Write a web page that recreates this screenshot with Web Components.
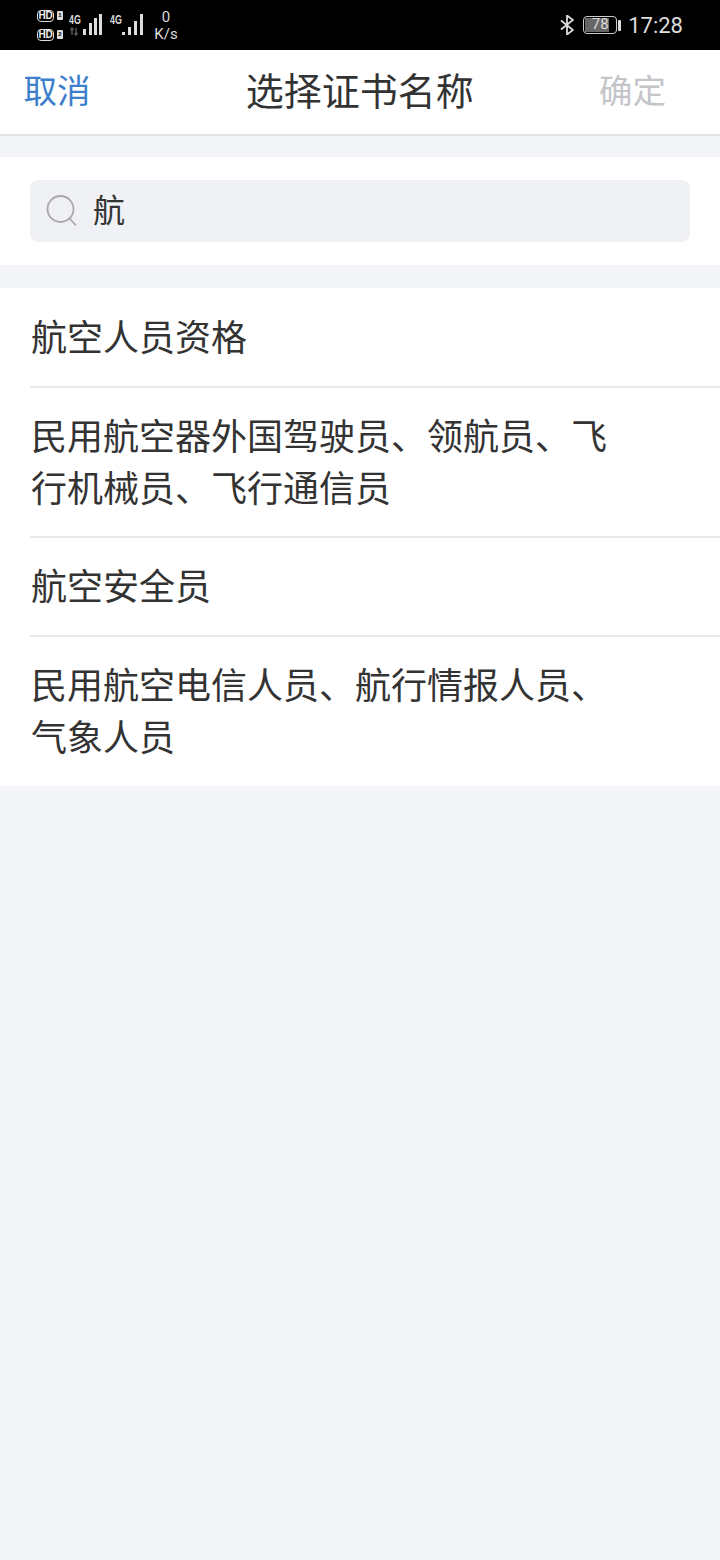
<!DOCTYPE html>
<html>
<head>
<meta charset="utf-8">
<style>
html, body { margin: 0; padding: 0; background: #f4f5f9; }
body { width: 720px; height: 1560px; overflow: hidden; font-family: "Noto Sans CJK SC", "Liberation Sans", sans-serif; color: #333; }
</style>
</head>
<body>
<status-bar></status-bar>
<nav-bar title="选择证书名称" left="取消" right="确定"></nav-bar>
<search-box value="航"></search-box>
<cert-list>
  <cert-item>航空人员资格</cert-item>
  <cert-item two>民用航空器外国驾驶员、领航员、飞<br>行机械员、飞行通信员</cert-item>
  <cert-item>航空安全员</cert-item>
  <cert-item two last>民用航空电信人员、航行情报人员、<br>气象人员</cert-item>
</cert-list>

<script>
// top phone status bar
class StatusBar extends HTMLElement {
  constructor() {
    super();
    this.attachShadow({ mode: 'open' });
    this.shadowRoot.innerHTML = `
      <style>
        :host { display: flex; height: 50px; background: #000; color: #ddd; align-items: center; justify-content: space-between; padding: 0 37px; box-sizing: border-box; font-family: "Roboto", "Liberation Sans", sans-serif; }
        .left, .right { display: flex; align-items: center; }
        .sims { display: flex; flex-direction: column; gap: 7px; width: 32px; }
        .hd { display: flex; align-items: center; gap: 3px; }
        .hd b { font: 700 10px/10px "Liberation Sans", sans-serif; border: 1.5px solid #ddd; color: #eee; border-radius: 4px; width: 17px; height: 12px; box-sizing: border-box; text-align: center; letter-spacing: -.3px; }
        .hd i { font: 700 6px/9px "Liberation Sans", sans-serif; font-style: normal; background: #ddd; color: #000; width: 6px; height: 9px; text-align: center; border-radius: 1px; }
        .sig { position: relative; width: 35px; height: 24px; margin-right: 6px; }
        .sig span { position: absolute; left: 0; top: 1px; font: 700 13px/11px "Liberation Sans", sans-serif; transform: scaleX(.68); transform-origin: left center; }
        .sig svg { position: absolute; left: 0; top: 0; }
        .speed { font-size: 15px; line-height: 17px; text-align: center; margin-left: 3px; width: 24px; padding-top: 2px; }
        .bt { margin-right: 9px; }
        .bat { position: relative; width: 34px; height: 18px; border: 1.5px solid #ccc; border-radius: 4px; box-sizing: border-box; overflow: hidden; }
        .bat div { position: absolute; left: 1px; top: 1px; bottom: 1px; width: 24px; background: #666; }
        .bat span { position: absolute; left: 0; right: 0; top: 0; text-align: center; font-size: 15px; line-height: 15px; color: #ddd; }
        .nub { width: 3px; height: 11px; background: #ddd; border-radius: 1px; margin: 0 7px 0 1px; }
        .time { font-size: 22px; }
      </style>
      <div class="left">
        <div class="sims">
          <div class="hd"><b>HD</b><i>1</i></div>
          <div class="hd"><b>HD</b><i>2</i></div>
        </div>
        <div class="sig"><span>4G</span>
          <svg width="35" height="24" fill="#ddd"><rect x="14" y="16" width="3" height="6"/><rect x="20" y="10" width="3" height="12"/><rect x="25" y="5" width="3" height="17"/><rect x="30" y="1" width="3" height="21"/><path d="M3 15v7M1.500 17l1.500-2 1.500 2M7 22v-7M5.500 20l1.500 2 1.500-2" stroke="#555" fill="none" stroke-width="1.5"/></svg>
        </div>
        <div class="sig"><span>4G</span>
          <svg width="35" height="24" fill="#ddd"><rect x="12" y="19" width="3" height="3"/><rect x="18" y="14" width="3" height="8"/><rect x="24" y="8" width="3" height="14"/><rect x="30" y="1" width="3" height="21"/></svg>
        </div>
        <div class="speed">0<br>K/s</div>
      </div>
      <div class="right">
        <svg class="bt" width="14" height="20" viewBox="0 0 14 20" fill="none" stroke="#ddd" stroke-width="1.8"><path d="M1 5.500l12 9.500-6 4.500V.5l6 4.500L1 14.500"/></svg>
        <div class="bat"><div></div><span>78</span></div>
        <div class="nub"></div>
        <div class="time">17:28</div>
      </div>`;
  }
}
customElements.define('status-bar', StatusBar);

// title bar with left and right actions
class NavBar extends HTMLElement {
  constructor() {
    super();
    this.attachShadow({ mode: 'open' });
    this.shadowRoot.innerHTML = `
      <style>
        :host { display: grid; grid-template-columns: 1fr auto 1fr; height: 86px; background: #fff; border-bottom: 2px solid #e2e3e6; box-sizing: border-box; align-items: center; padding: 0 54px 6px 23.5px; margin-bottom: 21px; }
        .btn { font-size: 33.5px; white-space: nowrap; line-height: 40px; }
        .l { color: #3d7fcc; }
        .r { color: #c4c5c9; justify-self: end; }
        .t { font-size: 38px; color: #333; line-height: 44px; margin-left: 30px; }
      </style>
      <div class="btn l"></div><div class="t"></div><div class="btn r"></div>`;
    this.shadowRoot.querySelector('.l').textContent = this.getAttribute('left');
    this.shadowRoot.querySelector('.t').textContent = this.getAttribute('title');
    this.shadowRoot.querySelector('.r').textContent = this.getAttribute('right');
  }
}
customElements.define('nav-bar', NavBar);

class SearchBox extends HTMLElement {
  constructor() {
    super();
    this.attachShadow({ mode: 'open' });
    this.shadowRoot.innerHTML = `
      <style>
        :host { display: block; background: #fff; padding: 23px 30px; margin-bottom: 23px; }
        .box { height: 62px; background: #f0f1f5; border-radius: 8px; display: flex; align-items: center; padding-left: 16px; }
        svg { margin-right: 15px; }
        .v { font-size: 32px; color: #333; line-height: 40px; margin-top: -6px; }
      </style>
      <div class="box">
        <svg width="32" height="34" viewBox="0 0 32 34" fill="none" stroke="#a9a9ab" stroke-width="1.8"><circle cx="14.5" cy="15" r="13"/><path d="M23.500 24.500l6.500 7"/></svg>
        <div class="v"></div>
      </div>`;
    this.shadowRoot.querySelector('.v').textContent = this.getAttribute('value');
  }
}
customElements.define('search-box', SearchBox);

class CertList extends HTMLElement {
  constructor() {
    super();
    this.attachShadow({ mode: 'open' });
    this.shadowRoot.innerHTML = `
      <style>:host { display: block; background: #fff; padding-left: 30px; }</style>
      <slot></slot>`;
  }
}
customElements.define('cert-list', CertList);

class CertItem extends HTMLElement {
  constructor() {
    super();
    this.attachShadow({ mode: 'open' });
    this.shadowRoot.innerHTML = `
      <style>
        :host { display: block; padding: 20px 0 25px 1px; font-size: 36px; line-height: 52px; color: #333; border-bottom: 2px solid #e8e9ec; }
        :host(:first-child) { padding-top: 21px; }
        :host([two]) { padding-bottom: 24px; }
        :host([last]) { border-bottom: 0; padding-bottom: 25px; }
      </style>
      <slot></slot>`;
  }
}
customElements.define('cert-item', CertItem);
</script>
</body>
</html>
